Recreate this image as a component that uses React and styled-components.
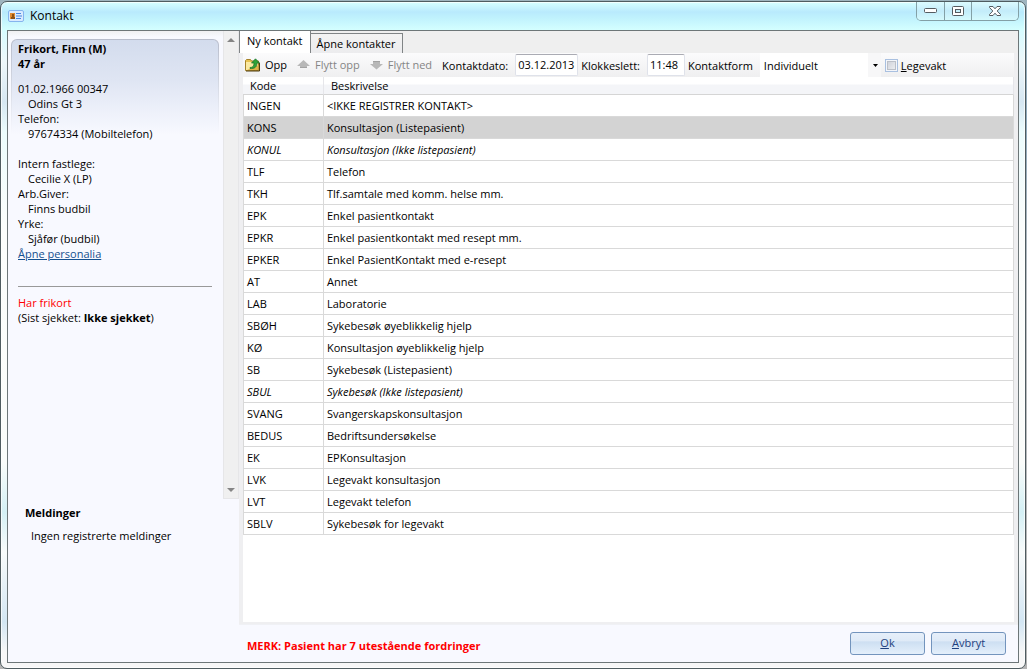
import React from "react";
import styled, { createGlobalStyle } from "styled-components";

const Global = createGlobalStyle`
  * { box-sizing: border-box; }
  html, body { margin: 0; }
  body, button, input, select {
    font-family: "Open Sans", "Noto Sans", sans-serif;
  }
  body { font-size: 11px; line-height: 15px; color: #000; background: #9fb6c0; }
  button, input, select { color: inherit; }
`;

const Desktop = styled.div`
  display: flex;
  min-height: 100vh;
  padding: 1px 1px 0 0;
  background: linear-gradient(180deg, #9fb5bf 0, #8fa9bd 120px, #b9bcc0 300px, #b4b4b4 100%);
`;

const Window = styled.div`
  flex: 1;
  display: flex;
  flex-direction: column;
  min-width: 0;
  padding: 0 6px 5px 6px;
  border: 1px solid #4f5c60;
  border-radius: 7px;
  box-shadow: inset 0 0 0 1px #ffffffb0;
  background:
    linear-gradient(180deg, #d6ffff 0, #b9eafd 10px, #c0f2fd 16px, #d4ffff 28px, transparent 29px),
    linear-gradient(180deg, #d8fbff 30px, #eef7fa 60px, #d6e7f2 100px, #ecfcfd 130px, #fbfdfc 230px, #fafcfa 460px, #d4f0f5 510px, #f8fbfb 550px, #d3e6f3 620px, #f7f7f7 650px);
`;

const TitleBar = styled.header`
  display: flex;
  align-items: flex-start;
  justify-content: space-between;
  height: 28px;
`;

const Title = styled.h1`
  display: flex;
  align-items: center;
  gap: 6px;
  margin: 0;
  padding: 5px 1px;
  font-size: 12px;
  line-height: 18px;
  font-weight: 400;
`;

const Caption = styled.div`
  display: flex;
  height: 19px;
  border: 1px solid #83a0a6;
  border-top: 0;
  border-radius: 0 0 5px 5px;
  overflow: hidden;
`;

const CaptionButton = styled.button`
  display: flex;
  align-items: center;
  justify-content: center;
  width: ${(p) => (p.$wide ? 47 : 27)}px;
  padding: 0;
  border: 0;
  border-left: ${(p) => (p.$first ? 0 : "1px solid #83a0a6")};
  background: linear-gradient(180deg, #dcfbff 0, #c3ecfa 50%, #d5fafd 100%);
`;

const Client = styled.div`
  flex: 1;
  display: flex;
  min-height: 0;
  border: 1px solid #6d7678;
  background: #f8f9ff;
`;

const Side = styled.aside`
  flex: none;
  display: flex;
  flex-direction: column;
  width: 231px;
`;

const SideScroll = styled.div`
  display: flex;
  height: 468px;
`;

const PatientArea = styled.div`
  flex: 1;
  padding: 8px 4px 0 3px;
  background: linear-gradient(180deg, #f0f0f2 0, #f8f9ff 6px);
`;

const PatientCard = styled.section`
  padding: 1px 6px;
  border-radius: 6px 6px 0 0;
  border: 1px solid transparent;
  background:
    linear-gradient(180deg, #d3dced 0, #dfe5f3 40px, #f8f9ff 95px) padding-box,
    linear-gradient(180deg, #b7bccb 0, #d8dce6 50px, #f8f9ff 95px) border-box;
`;

const Name = styled.h2`
  margin: 0 0 10px;
  font-size: 11px;
  line-height: 15px;
  font-weight: 700;
`;

const Line = styled.div`
  min-height: 15px;
  padding-left: ${(p) => (p.$indent ? 10 : 0)}px;
`;

const Link = styled.a`
  color: #15508f;
`;

const Divider = styled.hr`
  margin: 25px 0 8px;
  border: 0;
  border-top: 1px solid #999;
`;

const Alert = styled.div`
  color: #f00;
`;

const ScrollTrack = styled.div`
  display: flex;
  flex-direction: column;
  justify-content: space-between;
  width: 16px;
  padding: 2px 0;
  border: 1px solid #e6e6e8;
  border-top: 0;
  background: #f0f0f0;
`;

const ScrollButton = styled.button`
  display: flex;
  align-items: center;
  justify-content: center;
  width: 100%;
  height: 13px;
  padding: 0;
  border: 0;
  background: none;
`;

const Messages = styled.section`
  padding: 6px 17px;
`;

const MessagesTitle = styled.h2`
  margin: 0 0 8px;
  font-size: 11px;
  line-height: 15px;
  font-weight: 700;
`;

const MessageText = styled.p`
  margin: 0;
  padding-left: 6px;
`;

const Main = styled.main`
  flex: 1;
  display: flex;
  flex-direction: column;
  min-width: 0;
`;

const Tabs = styled.div`
  display: flex;
  align-items: flex-end;
  height: 22px;
  background: #efefef;
`;

const Tab = styled.button`
  height: ${(p) => (p.$active ? 22 : 20)}px;
  padding: ${(p) => (p.$active ? "0 7px 2px" : "0 6px")};
  border: 1px solid #808486;
  border-bottom: 0;
  border-left-width: ${(p) => (p.$active ? 1 : 0)}px;
  border-top-width: ${(p) => (p.$active ? 0 : 1)}px;
  background: ${(p) => (p.$active ? "#fff" : "linear-gradient(180deg, #f3f3f3, #ececee)")};
  font-size: 11px;
  line-height: 18px;
  white-space: nowrap;
`;

const Panel = styled.div`
  flex: 1;
  display: flex;
  flex-direction: column;
  border: solid #efeff1;
  border-width: 0 4px 2px 4px;
  background: #fff;
`;

const Toolbar = styled.div`
  display: flex;
  align-items: center;
  height: 24px;
  padding-left: 2px;
  background: linear-gradient(180deg, #fbfbfc, #efeff0);
  white-space: nowrap;
`;

const ToolButton = styled.button`
  display: flex;
  align-items: center;
  gap: 5px;
  margin-right: 10px;
  padding: 0;
  border: 0;
  background: none;
  font-size: 11px;
  line-height: 18px;
  &:disabled { color: #858585; }
`;

const Label = styled.label`
  margin-right: 7px;
`;

const Field = styled.input`
  width: ${(p) => p.$width}px;
  height: 22px;
  margin-right: 3px;
  padding: 0 0 2px 2px;
  border: 1px solid #dfe2ea;
  border-top-color: #aaabb3;
  border-radius: 2px;
  background: #fff;
  font-size: 11px;
`;

const SelectBox = styled.div`
  display: grid;
  align-items: center;
  width: 121px;
  height: 24px;
  margin-right: 4px;
  background: linear-gradient(90deg, #fff 108px, #f7f7f8 108px);
  & > * { grid-area: 1 / 1; }
  & > svg { justify-self: end; margin-right: 3px; pointer-events: none; }
`;

const Select = styled.select`
  width: 100%;
  height: 24px;
  padding: 0 12px 0 4px;
  border: 0;
  appearance: none;
  background: none;
  font-size: 11px;
`;

const Check = styled.input`
  appearance: none;
  width: 13px;
  height: 13px;
  margin: 0 3px 0 0;
  border: 1px solid #a9c0e0;
  background: linear-gradient(135deg, #c9ccd4, #f3f4f6);
  box-shadow: inset 0 0 0 1px #f4f6fa, inset 0 0 0 2px #bcc0c8;
`;

const Table = styled.table`
  width: 100%;
  border-collapse: separate;
  border-spacing: 0;
  table-layout: fixed;
`;

const Head = styled.th`
  width: ${(p) => p.$width || "auto"};
  height: 18px;
  padding: 0 0 0 7px;
  border-right: 1px solid #e6e6ea;
  border-bottom: 1px solid #d5d5d5;
  background: linear-gradient(180deg, #fff 0, #fff 7px, #f4f5f8 8px, #f4f5f8 100%);
  font-weight: 400;
  text-align: left;
`;

const Row = styled.tr`
  background: ${(p) => (p.$selected ? "#d3d3d3" : "#fff")};
  font-style: ${(p) => (p.$italic ? "italic" : "normal")};
`;

const Cell = styled.td`
  height: 22px;
  padding: 0 0 0 3px;
  border-right: 1px solid #d9d9d9;
  border-bottom: 1px solid #d9d9d9;
  &:first-child { border-left: 1px solid #d9d9d9; }
`;

const Footer = styled.footer`
  display: flex;
  align-items: center;
  gap: 6px;
  height: 38px;
  padding: 0 12px 1px 8px;
  border-top: 1px solid #f0f1f5;
`;

const Notice = styled.strong`
  flex: 1;
  padding-top: 4px;
  color: #f00;
`;

const DialogButton = styled.button`
  width: 75px;
  height: 23px;
  padding: 0;
  border: 1px solid #7394bd;
  border-radius: 3px;
  background: linear-gradient(180deg, #e6effa 0, #dfeaf7 38%, #cddff2 42%, #e4effb 100%);
  color: #1e3f7e;
  font-size: 11px;
  line-height: 18px;
`;

const CardIcon = () => (
  <svg width="16" height="12" viewBox="0 0 16 12">
    <rect x=".5" y=".5" width="15" height="11" rx="1.5" fill="#d9ebff" stroke="#85b5ee" />
    <rect x="2" y="3" width="5" height="6" fill="#e08a30" />
    <path d="M3 9V7h1V4h2v3h1v2z" fill="#8f5214" />
    <path d="M8 3.500h5M8 6h6M8 8.500h5" stroke="#4a86e0" strokeWidth="1.2" />
  </svg>
);

const FolderUpIcon = () => (
  <svg width="15" height="14" viewBox="0 0 15 14">
    <path d="M.5 12.500v-10l1-1h4l1 1.500h7v9.500z" fill="#e8c250" stroke="#a5822a" />
    <path d="M1 4h12v8H1z" fill="#fbe9a0" />
    <path d="M1 12.500 13.500 12V7z" fill="#e0b548" />
    <path d="M14.500 5v8H1" fill="none" stroke="#4d3b0c" />
    <path d="M5 9.500c3 0 4-1.500 4-4.500H6.500L10.500.8 14.500 5H12c0 4-2.500 6-7 5.500z" fill="#2fa238" stroke="#18702a" strokeWidth=".7" />
  </svg>
);

const MoveIcon = ({ down }) => (
  <svg width="13" height="10" viewBox="0 0 13 10">
    <path
      d={down ? "M3 1h7v3h3L6.500 9.500 0 4h3z" : "M3 8h7V6h3L6.500 0 0 6h3z"}
      fill="#b8b8b8"
    />
    <path d={down ? "M3 1.500h7" : "M3 7.500h7"} stroke="#a2a2a2" />
  </svg>
);

const ScrollArrow = ({ down }) => (
  <svg width="8" height="4" viewBox="0 0 8 4">
    <path d={down ? "M0 0h8L4 4z" : "M4 0l4 4H0z"} fill="#858585" />
  </svg>
);

const rows = [
  ["INGEN", "<IKKE REGISTRER KONTAKT>"],
  ["KONS", "Konsultasjon (Listepasient)", "selected"],
  ["KONUL", "Konsultasjon (Ikke listepasient)", "italic"],
  ["TLF", "Telefon"],
  ["TKH", "Tlf.samtale med komm. helse mm."],
  ["EPK", "Enkel pasientkontakt"],
  ["EPKR", "Enkel pasientkontakt med resept mm."],
  ["EPKER", "Enkel PasientKontakt med e-resept"],
  ["AT", "Annet"],
  ["LAB", "Laboratorie"],
  ["SBØH", "Sykebesøk øyeblikkelig hjelp"],
  ["KØ", "Konsultasjon øyeblikkelig hjelp"],
  ["SB", "Sykebesøk (Listepasient)"],
  ["SBUL", "Sykebesøk (Ikke listepasient)", "italic"],
  ["SVANG", "Svangerskapskonsultasjon"],
  ["BEDUS", "Bedriftsundersøkelse"],
  ["EK", "EPKonsultasjon"],
  ["LVK", "Legevakt konsultasjon"],
  ["LVT", "Legevakt telefon"],
  ["SBLV", "Sykebesøk for legevakt"],
];

export default function App() {
  return (
    <Desktop>
      <Global />
      <Window>
        <TitleBar>
          <Title><CardIcon />Kontakt</Title>
          <Caption>
            <CaptionButton $first aria-label="Minimer">
              <svg width="13" height="6" viewBox="0 0 13 6"><rect x=".5" y=".5" width="12" height="4" rx="1" fill="#fff" stroke="#555b60" /></svg>
            </CaptionButton>
            <CaptionButton aria-label="Maksimer">
              <svg width="12" height="10" viewBox="0 0 12 10">
                <rect x=".5" y=".5" width="11" height="9" rx="1" fill="#fff" stroke="#555b60" />
                <rect x="3.500" y="3.500" width="5" height="3" fill="#c6effa" stroke="#555b60" />
              </svg>
            </CaptionButton>
            <CaptionButton $wide aria-label="Lukk">
              <svg width="12" height="10" viewBox="0 0 12 10">
                <path d="M.5.5h3.500l2 2.300L8 .5h3.500v1L8.200 5l3.300 3.500v1H8L6 7.200 4 9.500H.5v-1L3.800 5 .5 1.500z" fill="#fff" stroke="#555b60" />
              </svg>
            </CaptionButton>
          </Caption>
        </TitleBar>
        <Client>
          <Side>
            <SideScroll>
              <PatientArea>
                <PatientCard>
                  <Name>Frikort, Finn (M)<br />47 år</Name>
                  <Line>01.02.1966 00347</Line>
                  <Line $indent>Odins Gt 3</Line>
                  <Line>Telefon:</Line>
                  <Line $indent>97674334 (Mobiltelefon)</Line>
                  <Line />
                  <Line>Intern fastlege:</Line>
                  <Line $indent>Cecilie X (LP)</Line>
                  <Line>Arb.Giver:</Line>
                  <Line $indent>Finns budbil</Line>
                  <Line>Yrke:</Line>
                  <Line $indent>Sjåfør (budbil)</Line>
                  <Line><Link href="#personalia">Åpne personalia</Link></Line>
                  <Divider />
                  <Alert>Har frikort</Alert>
                  <Line>(Sist sjekket: <b>Ikke sjekket</b>)</Line>
                </PatientCard>
              </PatientArea>
              <ScrollTrack>
                <ScrollButton aria-label="Rull opp"><ScrollArrow /></ScrollButton>
                <ScrollButton aria-label="Rull ned"><ScrollArrow down /></ScrollButton>
              </ScrollTrack>
            </SideScroll>
            <Messages>
              <MessagesTitle>Meldinger</MessagesTitle>
              <MessageText>Ingen registrerte meldinger</MessageText>
            </Messages>
          </Side>
          <Main>
            <Tabs role="tablist">
              <Tab $active role="tab" aria-selected="true">Ny kontakt</Tab>
              <Tab role="tab" aria-selected="false">Åpne kontakter</Tab>
            </Tabs>
            <Panel>
              <Toolbar>
                <ToolButton><FolderUpIcon />Opp</ToolButton>
                <ToolButton disabled><MoveIcon />Flytt opp</ToolButton>
                <ToolButton disabled><MoveIcon down />Flytt ned</ToolButton>
                <Label htmlFor="dato">Kontaktdato:</Label>
                <Field id="dato" $width={63} defaultValue="03.12.2013" />
                <Label htmlFor="tid">Klokkeslett:</Label>
                <Field id="tid" $width={38} defaultValue="11:48" />
                <Label htmlFor="form">Kontaktform</Label>
                <SelectBox>
                  <Select id="form"><option>Individuelt</option></Select>
                  <svg width="5" height="3" viewBox="0 0 5 3"><path d="M0 0h5L2.500 3z" /></svg>
                </SelectBox>
                <Check type="checkbox" id="legevakt" />
                <Label htmlFor="legevakt"><u>L</u>egevakt</Label>
              </Toolbar>
              <Table>
                <thead>
                  <tr><Head $width="81px">Kode</Head><Head>Beskrivelse</Head></tr>
                </thead>
                <tbody>
                  {rows.map(([code, text, kind]) => (
                    <Row key={code} $selected={kind === "selected"} $italic={kind === "italic"}>
                      <Cell>{code}</Cell>
                      <Cell>{text}</Cell>
                    </Row>
                  ))}
                </tbody>
              </Table>
            </Panel>
            <Footer>
              <Notice>MERK: Pasient har 7 utestående fordringer</Notice>
              <DialogButton><u>O</u>k</DialogButton>
              <DialogButton><u>A</u>vbryt</DialogButton>
            </Footer>
          </Main>
        </Client>
      </Window>
    </Desktop>
  );
}
